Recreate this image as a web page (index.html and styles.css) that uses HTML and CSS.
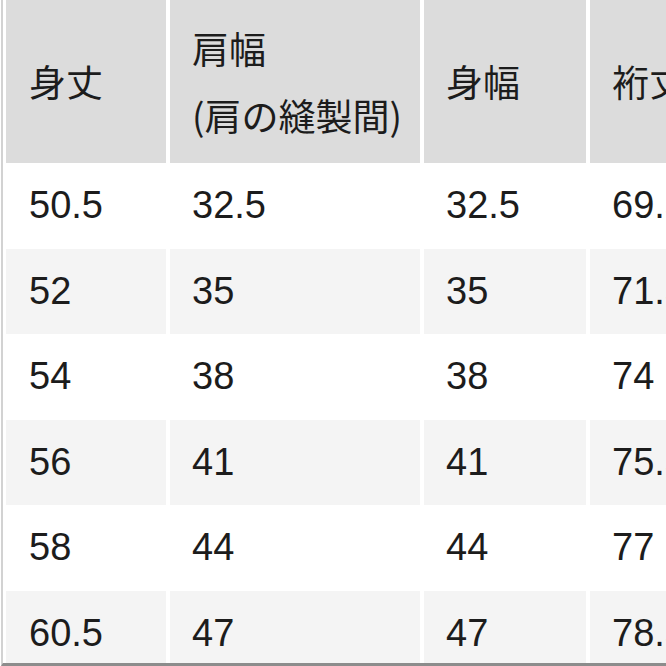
FILE: index.html
```html
<!DOCTYPE html>
<html lang="ja">
<head>
<meta charset="utf-8">
<link rel="stylesheet" href="styles.css">
</head>
<body>
<div class="frame">
  <div class="grid">
    <div class="cell head">身丈</div>
    <div class="cell head two">肩幅<br>(肩の縫製間)</div>
    <div class="cell head">身幅</div>
    <div class="cell head">裄丈</div>

    <div class="cell">50.5</div><div class="cell">32.5</div><div class="cell">32.5</div><div class="cell">69.5</div>
    <div class="cell alt">52</div><div class="cell alt">35</div><div class="cell alt">35</div><div class="cell alt">71.5</div>
    <div class="cell">54</div><div class="cell">38</div><div class="cell">38</div><div class="cell">74</div>
    <div class="cell alt">56</div><div class="cell alt">41</div><div class="cell alt">41</div><div class="cell alt">75.5</div>
    <div class="cell">58</div><div class="cell">44</div><div class="cell">44</div><div class="cell">77</div>
    <div class="cell alt">60.5</div><div class="cell alt">47</div><div class="cell alt">47</div><div class="cell alt">78.5</div>
  </div>
</div>
</body>
</html>
```

FILE: styles.css
```css
html, body {
  margin: 0;
  padding: 0;
  background: #ffffff;
  overflow: hidden;
}

.frame {
  width: 665px;
  height: 663px;
  margin-left: 1px;
  border-left: 2px solid #d2d2d2;
  border-bottom: 3px solid #8c8c8c;
  padding-left: 3px;
  overflow: hidden;
  box-sizing: content-box;
  font-family: "Liberation Sans", "Noto Sans CJK JP", sans-serif;
  color: #1c1c1c;
}

.grid {
  display: grid;
  grid-template-columns: 160px 250px 162px 170px;
  grid-template-rows: 163px;
  grid-auto-rows: 85.5px;
  column-gap: 4px;
  width: max-content;
}

.cell {
  display: flex;
  align-items: center;
  padding-left: 22px;
  font-size: 38px;
  white-space: nowrap;
  background: #ffffff;
}

.cell:nth-child(4n+1) {
  padding-left: 23px;
}

.head {
  background: #dcdcdc;
  font-family: "Noto Sans CJK JP", sans-serif;
  font-size: 37px;
  line-height: 67px;
}

.alt {
  background: #f4f4f4;
}
```
